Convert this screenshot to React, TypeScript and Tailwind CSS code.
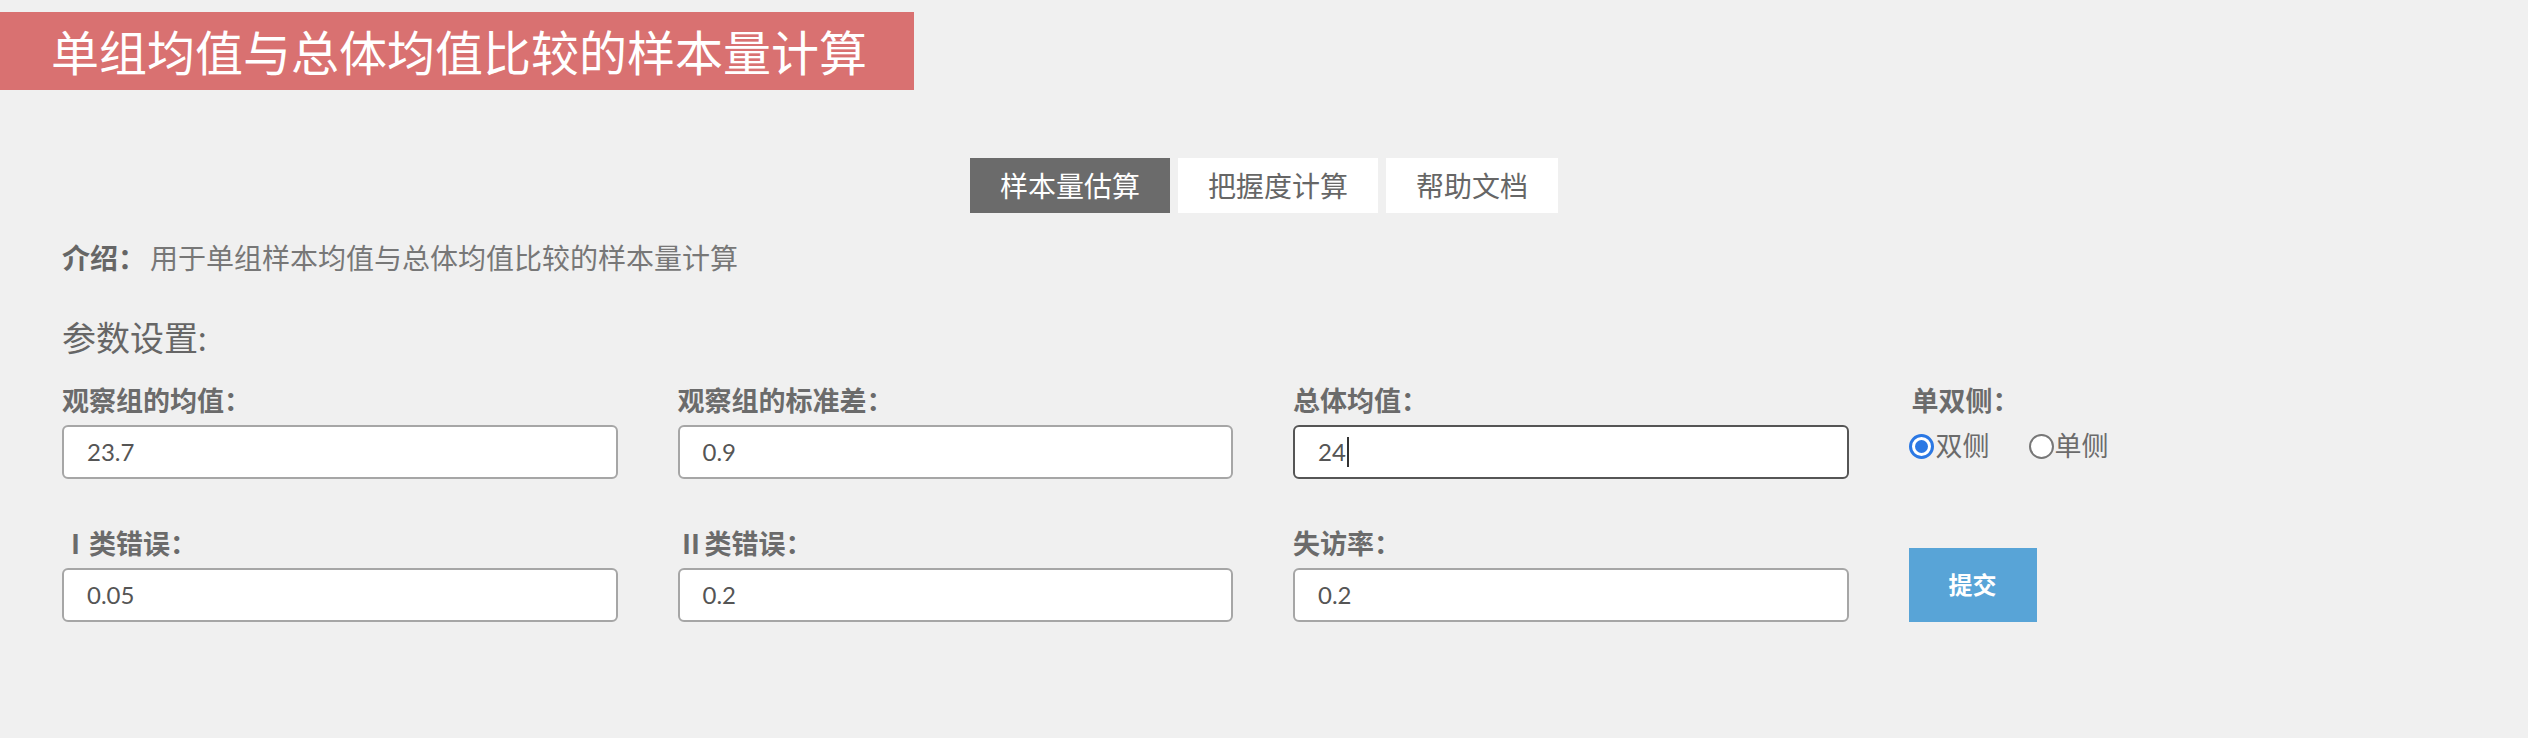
import React from "react";

const FONT = { fontFamily: 'Lato, "Noto Sans CJK SC", sans-serif' };

function Field({ label, value, focused }: { label: string; value: string; focused?: boolean }) {
  return (
    <div className="flex flex-col">
      <div className="h-[36px] leading-[36px] text-[27px] font-bold text-[#6b6b6b] whitespace-nowrap">{label}</div>
      <div
        className={
          "mt-[6px] h-[54px] rounded-[6px] border-2 bg-white flex items-center pl-[23px] text-[24px] text-[#555] " +
          (focused ? "border-[#555555]" : "border-[#a6a6a6]")
        }
      >
        <span>{value}</span>
        {focused && <span className="ml-[1px] inline-block w-[2px] h-[30px] bg-[#333]" />}
      </div>
    </div>
  );
}

export default function App() {
  return (
    <div className="min-h-[738px] w-full bg-[#f0f0f0] pt-[12px]" style={FONT}>
      <div className="w-[914px] h-[78px] bg-[#d97171] flex items-center pl-[51px] pt-[4px] text-white text-[48px] whitespace-nowrap">
        单组均值与总体均值比较的样本量计算
      </div>

      <div className="mt-[68px] flex justify-center gap-[8px]">
        <div className="h-[55px] px-[30px] flex items-center bg-[#6b6b6b] text-white text-[28px]">样本量估算</div>
        <div className="h-[55px] px-[30px] flex items-center bg-white text-[#666] text-[28px]">把握度计算</div>
        <div className="h-[55px] px-[30px] flex items-center bg-white text-[#666] text-[28px]">帮助文档</div>
      </div>

      <div className="px-[62px]">
        <div className="mt-[25px] h-[40px] leading-[40px] whitespace-nowrap flex items-center">
          <span className="font-bold text-[#666] text-[28px]">介绍：</span>
          <span className="ml-[4px] text-[#777] text-[28px]">用于单组样本均值与总体均值比较的样本量计算</span>
        </div>

        <div className="mt-[38px] h-[44px] leading-[44px] text-[34px] text-[#666]">参数设置:</div>

        <div className="mt-[23px] grid grid-cols-4 gap-x-[60px] w-[2402px]">
          <Field label="观察组的均值：" value="23.7" />
          <Field label="观察组的标准差：" value="0.9" />
          <Field label="总体均值：" value="24" focused />
          <div className="flex flex-col">
            <div className="h-[36px] leading-[36px] text-[27px] font-bold text-[#6b6b6b] pl-[3px]">单双侧：</div>
            <div className="mt-[9px] h-[36px] flex items-center text-[27px] text-[#6b6b6b]">
              <span className="w-[25px] h-[25px] rounded-full border-[3px] border-[#2b78e4] bg-white flex items-center justify-center">
                <span className="w-[13px] h-[13px] rounded-full bg-[#2b78e4]" />
              </span>
              <span className="ml-[2px]">双侧</span>
              <span className="ml-[39px] w-[25px] h-[25px] rounded-full border-2 border-[#777] bg-white" />
              <span className="ml-[1px]">单侧</span>
            </div>
          </div>

          <div className="mt-[47px]">
            <Field label="Ⅰ类错误：" value="0.05" />
          </div>
          <div className="mt-[47px]">
            <Field label="Ⅱ类错误：" value="0.2" />
          </div>
          <div className="mt-[47px]">
            <Field label="失访率：" value="0.2" />
          </div>
          <div className="mt-[47px] flex items-end">
            <button className="w-[128px] h-[74px] bg-[#58a4d7] text-white text-[24px] font-bold">提交</button>
          </div>
        </div>
      </div>
    </div>
  );
}
